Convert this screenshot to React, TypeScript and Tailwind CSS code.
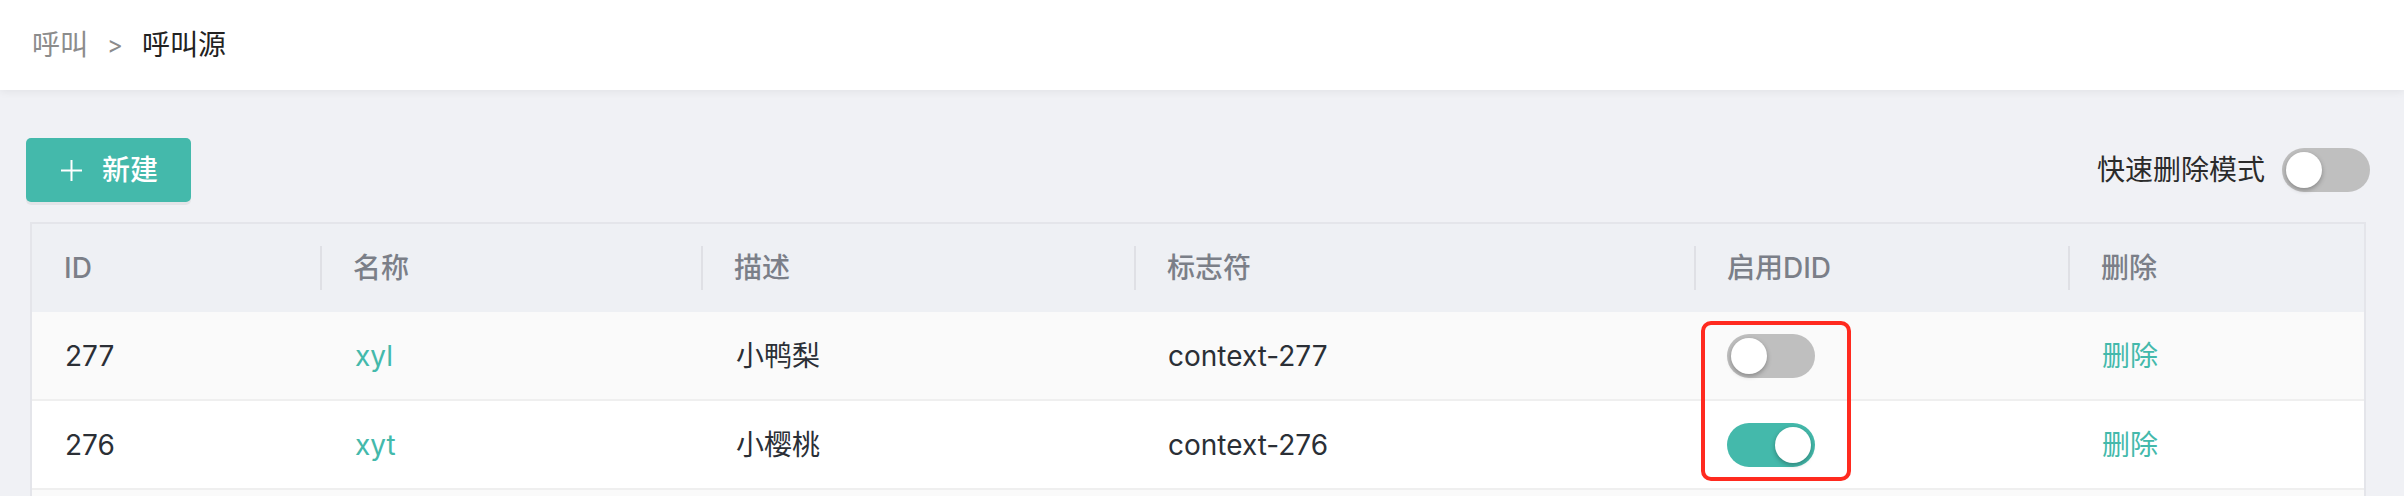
import React from "react";

type Row = { id: number; name: string; desc: string; tag: string; did: boolean };

const rows: Row[] = [
  { id: 277, name: "xyl", desc: "小鸭梨", tag: "context-277", did: false },
  { id: 276, name: "xyt", desc: "小樱桃", tag: "context-276", did: true },
];

const cols = "grid grid-cols-[288px_381px_433px_560px_374px_1fr]";

function Toggle({ on }: { on: boolean }) {
  return (
    <div
      className={
        on
          ? "flex h-[44px] w-[88px] items-center justify-end rounded-full bg-[#44b9ab] px-[4px]"
          : "flex h-[44px] w-[88px] items-center justify-start rounded-full bg-[#bfbfbf] px-[4px]"
      }
    >
      <div className="h-[36px] w-[36px] rounded-full bg-white shadow-[0_2px_5px_rgba(0,0,0,0.3)]" />
    </div>
  );
}

function HeadCell({ label, first = false }: { label: string; first?: boolean }) {
  return (
    <div className="flex h-[88px] items-center">
      {!first && <div className="h-[44px] w-[2px] bg-[#dfe0e5]" />}
      <span className={first ? "pl-[32px]" : "pl-[31px]"}>{label}</span>
    </div>
  );
}

export default function App() {
  return (
    <div className="h-[496px] w-full overflow-hidden bg-[#f0f1f5] font-['Inter','Noto_Sans_CJK_SC',sans-serif] text-[28px] text-[#2b2f36]">
      {/* breadcrumb */}
      <header className="relative z-10 flex h-[90px] items-center bg-white pl-[32px] shadow-[0_2px_8px_rgba(0,0,0,0.06)]">
        <span className="text-[#8c8c8c]">呼叫</span>
        <span className="mx-[19px] text-[24px] text-[#8c8c8c]">&gt;</span>
        <span className="text-[#222]">呼叫源</span>
      </header>

      <div className="pl-[26px] pr-[34px] pt-[48px]">
        {/* toolbar */}
        <div className="flex items-center justify-between">
          <button className="flex h-[64px] items-center gap-[20px] rounded-[5px] bg-[#44b9ab] pl-[35px] pr-[33px] text-white shadow-[0_3px_0_rgba(0,0,0,0.05)]">
            <svg width="21" height="21" viewBox="0 0 21 21">
              <path d="M10.5 0v21M0 10.5h21" stroke="white" strokeWidth="2" />
            </svg>
            <span className="font-medium">新建</span>
          </button>
          <div className="flex items-center gap-[17px]">
            <span className="text-[#2b2b2b]">快速删除模式</span>
            <Toggle on={false} />
          </div>
        </div>

        {/* table */}
        <div className="relative mx-[4px] mt-[20px] border-2 border-[#e4e5ea] bg-white">
          <div className={`${cols} bg-[#eef0f4] font-medium text-[#7b7f88]`}>
            <HeadCell label="ID" first />
            <HeadCell label="名称" />
            <HeadCell label="描述" />
            <HeadCell label="标志符" />
            <HeadCell label="启用DID" />
            <HeadCell label="删除" />
          </div>

          {rows.map((r, i) => (
            <div
              key={r.id}
              className={`${cols} h-[89px] items-center border-b-2 border-[#efefef] ${
                i % 2 === 0 ? "bg-[#fafafa]" : "bg-white"
              }`}
            >
              <span className="pl-[33px]">{r.id}</span>
              <span className="pl-[35px] text-[#44b9ab]">{r.name}</span>
              <span className="pl-[35px]">{r.desc}</span>
              <span className="pl-[34px]">{r.tag}</span>
              <div className="pl-[33px]">
                <Toggle on={r.did} />
              </div>
              <span className="pl-[34px] text-[#44b9ab]">删除</span>
            </div>
          ))}
          <div className="h-[89px] bg-[#fafafa]" />

          {/* annotation box */}
          <div className="absolute left-[1669px] top-[97px] h-[160px] w-[150px] rounded-[10px] border-[4px] border-[#ff2a1f]" />
        </div>
      </div>
    </div>
  );
}
